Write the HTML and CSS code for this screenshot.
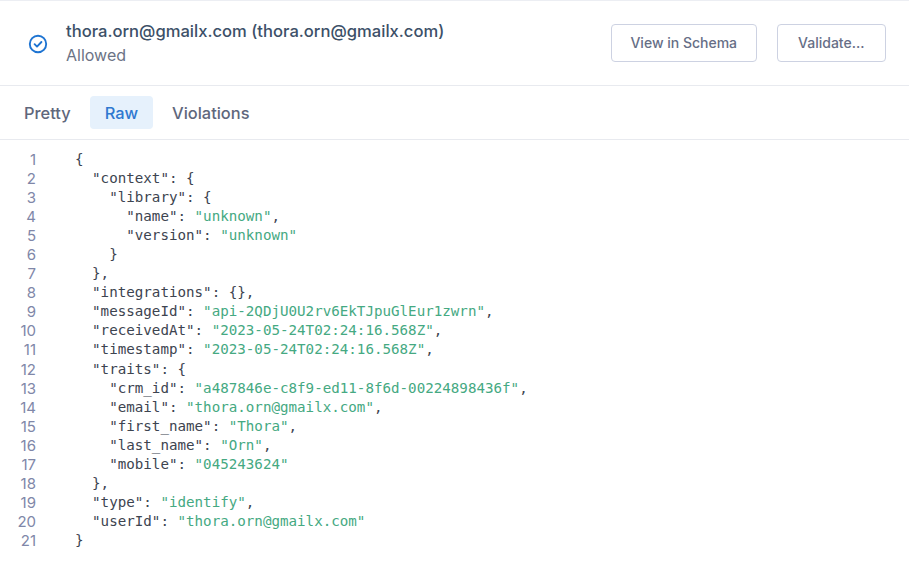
FILE: index.html
```html
<!DOCTYPE html>
<html lang="en">
<head>
<meta charset="utf-8">
<title>Event</title>
<link rel="stylesheet" href="styles.css">
</head>
<body>
<header class="head">
  <div class="who">
    <svg class="check" width="20" height="20" viewBox="0 0 20 20" fill="none"><circle cx="10" cy="10" r="8.2" stroke="#1e74d2" stroke-width="1.9"/><path d="M6.6 10.2l2.4 2.4 4.4-4.6" stroke="#1e74d2" stroke-width="1.9" stroke-linecap="round" stroke-linejoin="round"/></svg>
    <div class="who-text">
      <div class="title">thora.orn@gmailx.com (thora.orn@gmailx.com)</div>
      <div class="sub">Allowed</div>
    </div>
  </div>
  <div class="actions">
    <button class="btn btn-schema">View in Schema</button>
    <button class="btn btn-validate">Validate...</button>
  </div>
</header>
<nav class="tabs">
  <span class="tab">Pretty</span>
  <span class="tab active">Raw</span>
  <span class="tab">Violations</span>
</nav>
<main class="code">
<div class="nums">
<div>1</div><div>2</div><div>3</div><div>4</div><div>5</div><div>6</div><div>7</div>
<div>8</div><div>9</div><div>10</div><div>11</div><div>12</div><div>13</div><div>14</div>
<div>15</div><div>16</div><div>17</div><div>18</div><div>19</div><div>20</div><div>21</div>
</div>
<div class="src">
<div class="ln"><span>{</span></div>
<div class="ln i1"><span>"context": {</span></div>
<div class="ln i2"><span>"library": {</span></div>
<div class="ln i3"><span class="k">"name":</span><span class="v">"unknown"</span><span>,</span></div>
<div class="ln i3"><span class="k">"version":</span><span class="v">"unknown"</span></div>
<div class="ln i2"><span>}</span></div>
<div class="ln i1"><span>},</span></div>
<div class="ln i1"><span>"integrations": {},</span></div>
<div class="ln i1"><span class="k">"messageId":</span><span class="v">"api-2QDjU0U2rv6EkTJpuGlEur1zwrn"</span><span>,</span></div>
<div class="ln i1"><span class="k">"receivedAt":</span><span class="v">"2023-05-24T02:24:16.568Z"</span><span>,</span></div>
<div class="ln i1"><span class="k">"timestamp":</span><span class="v">"2023-05-24T02:24:16.568Z"</span><span>,</span></div>
<div class="ln i1"><span>"traits": {</span></div>
<div class="ln i2"><span class="k">"crm_id":</span><span class="v">"a487846e-c8f9-ed11-8f6d-00224898436f"</span><span>,</span></div>
<div class="ln i2"><span class="k">"email":</span><span class="v">"thora.orn@gmailx.com"</span><span>,</span></div>
<div class="ln i2"><span class="k">"first_name":</span><span class="v">"Thora"</span><span>,</span></div>
<div class="ln i2"><span class="k">"last_name":</span><span class="v">"Orn"</span><span>,</span></div>
<div class="ln i2"><span class="k">"mobile":</span><span class="v">"045243624"</span></div>
<div class="ln i1"><span>},</span></div>
<div class="ln i1"><span class="k">"type":</span><span class="v">"identify"</span><span>,</span></div>
<div class="ln i1"><span class="k">"userId":</span><span class="v">"thora.orn@gmailx.com"</span></div>
<div class="ln"><span>}</span></div>
</div>
</main>
</body>
</html>
```
FILE: styles.css
```css
* { box-sizing: border-box; }
html, body { margin: 0; height: 100%; }
body {
  background: #fff;
  font-family: Inter, "Noto Sans", sans-serif;
  border-top: 1px solid #eceef3;
  overflow: hidden;
}
.head {
  height: 85px;
  display: flex;
  align-items: center;
  justify-content: space-between;
  padding: 0 23.5px 0 28px;
  border-bottom: 1px solid #e8eaef;
}
.who { display: flex; align-items: center; gap: 18px; }
.check { display: block; margin-top: 1px; }
.title { font-size: 16.6px; font-weight: 500; color: #3c5068; line-height: 24px; }
.sub { font-size: 16px; color: #6b7385; line-height: 24px; }
.actions { display: flex; gap: 20px; margin-top: -1px; }
.btn {
  height: 38px;
  background: #fff;
  border: 1px solid #cdd2e2;
  border-radius: 4px;
  font: 500 14px Inter, sans-serif;
  color: #666e86;
  padding: 0;
}
.btn-schema { width: 146.5px; }
.btn-validate { width: 108.5px; }
.tabs {
  height: 54px;
  display: flex;
  align-items: center;
  gap: 5px;
  padding: 0 9.5px;
  border-bottom: 1px solid #e8eaef;
}
.tab {
  font-size: 16.4px;
  font-weight: 500;
  color: #5f677c;
  padding: 0 14.5px;
  height: 33px;
  line-height: 34px;
  border-radius: 4px;
}
.tab.active { background: #e6f1fc; color: #2f78d0; }
.code {
  display: flex;
  padding-top: 10px;
  line-height: 19.05px;
}
.nums {
  width: 36px;
  margin-right: 39px;
  text-align: right;
  font-family: Inter, sans-serif;
  font-size: 15px;
  color: #8087a8;
}
.nums div { height: 19.05px; }
.src {
  font-family: "DejaVu Sans Mono", monospace;
  font-size: 14.2px;
  font-weight: 400;
  color: #3d4450;
}
.ln { height: 19.05px; white-space: pre; }
.i1 { padding-left: 2ch; }
.i2 { padding-left: 4ch; }
.i3 { padding-left: 6ch; }
.k { margin-right: 1ch; }
.v { color: #45a982; }
```
